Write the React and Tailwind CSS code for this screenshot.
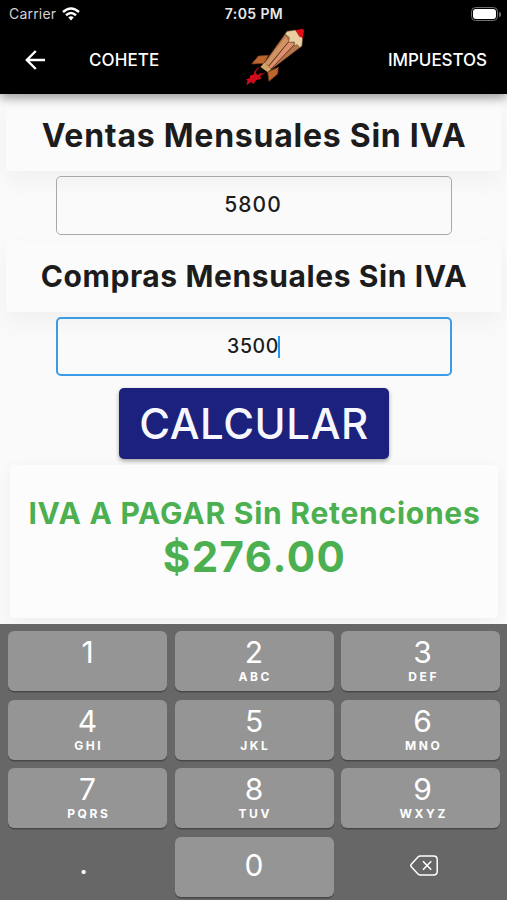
const keys = [
  ['1', ''], ['2', 'ABC'], ['3', 'DEF'],
  ['4', 'GHI'], ['5', 'JKL'], ['6', 'MNO'],
  ['7', 'PQRS'], ['8', 'TUV'], ['9', 'WXYZ'],
];

function Rocket() {
  return (
    <svg viewBox="0 24 240 198" className="h-[66px] w-20" fill="none">
      <path d="M50 132 L70 108 L100 106 L88 130 Z" fill="#bd652f" stroke="#7a3c1c" strokeWidth="2" />
      <path d="M130 142 L128 162 L102 184 L98 156 Z" fill="#bd652f" stroke="#7a3c1c" strokeWidth="2" />
      <path d="M70 140 L58 155 L57 163 L44 167 L45 174 L32 179 L38 182 L34 196 L48 186 L56 192 L64 180 L78 177 L76 166 L86 160 L76 160 L68 166 L62 158 Z" fill="#cf0d1a" />
      <path d="M74 140 L64 154 M92 156 L74 172" stroke="#7d0a10" strokeWidth="3" />
      <path d="M88 128 L150 42 L200 79 L99 156 L77 141 Z" fill="#b9764c" stroke="#4a2817" strokeWidth="2" />
      <path d="M90 130 L152 50 L162 66 L101 136 Z" fill="#cf9364" />
      <path d="M104 138 L162 66 L179 73 L110 146 Z" fill="#dd9170" />
      <path d="M102 137 L162 64 M108 147 L180 72" stroke="#63351f" strokeWidth="3" />
      <path d="M88 128 L77 141 L98 156 L108 148 Z" fill="#d3a468" />
      <path d="M150 42 L156 34 L182 30 L203 53 L201 77 L194 83 L187 74 L178 77 L178 66 L161 67 L163 53 Z" fill="#ead0a0" stroke="#6d4b30" strokeWidth="2" />
      <path d="M181 31 L204 26 L207 33 L203 53 L193 50 Z" fill="#df1019" />
    </svg>
  );
}

function Status() {
  return (
    <div className="grid h-7 grid-cols-3 items-center pl-[9px] pr-[6px] text-[14px] leading-none">
      <div className="flex items-center gap-[6px] text-[#d2d2d2]">
        <span className="tracking-[0.2px]">Carrier</span>
        <svg viewBox="0 0 18 14" className="h-[14px] w-[18px]" fill="none" stroke="#fff" strokeWidth="2.5">
          <path d="M1 5 Q9 -2 17 5" />
          <path d="M4 8.2 Q9 3.8 14 8.2" />
          <path d="M6.2 10.3 Q9 8.2 11.8 10.3 L9 13.5 Z" fill="#fff" stroke="none" />
        </svg>
      </div>
      <span className="pr-[2px] text-center font-semibold tracking-[0.4px] text-[#e8e8e8]">7:05 PM</span>
      <div className="flex items-center justify-end gap-px">
        <div className="flex h-[14px] w-[27px] rounded-[4.5px] border border-[#707070] p-[1px]">
          <div className="flex-1 rounded-[3px] bg-white" />
        </div>
        <div className="h-[5px] w-[2px] rounded-r-full bg-[#707070]" />
      </div>
    </div>
  );
}

export default function App() {
  return (
    <div className="flex h-[900px] w-[507px] flex-col overflow-hidden bg-[#fafafa] font-['Inter',sans-serif] text-[#1c1c1c]">
      <header className="z-10 h-[94px] shrink-0 bg-black text-white shadow-[0_4px_10px_rgba(0,0,0,0.38)]">
        <Status />
        <div className="flex h-[66px] items-center">
          <div className="flex w-[235px] items-center pl-[25px]">
            <svg viewBox="0 0 20 20" className="mb-[2px] h-5 w-5" fill="none" stroke="#fff" strokeWidth="2.4">
              <path d="M20 10 H2.5 M10.8 1 L1.8 10 L10.8 19" />
            </svg>
            <span className="ml-[44px] pb-px text-[17px] font-medium tracking-[0.1px]">COHETE</span>
          </div>
          <Rocket />
          <span className="mr-5 ml-auto pb-px text-[17px] font-medium tracking-[-0.05px]">IMPUESTOS</span>
        </div>
      </header>
      <main className="flex h-[530px] shrink-0 flex-col items-center pt-[6px]">
        <h1 className="flex h-[71px] w-[495px] items-center justify-center rounded bg-[#fbfbfb] pl-px text-[32px] font-bold tracking-[0.75px] whitespace-nowrap shadow-[0_10px_24px_rgba(0,0,0,0.045)]">Ventas Mensuales Sin IVA</h1>
        <div className="z-[1] mt-[5px] ml-px flex h-[59px] w-[396px] items-center justify-center rounded-[5px] border-[1.5px] border-[#a9a9a9] pr-[2px] pb-px text-[21px] font-medium tracking-[1.1px]">5800</div>
        <h1 className="mt-[6px] flex h-[71px] w-[495px] items-center justify-center rounded bg-[#fbfbfb] pl-px text-[30px] font-bold tracking-[0.6px] whitespace-nowrap shadow-[0_10px_24px_rgba(0,0,0,0.045)]">Compras Mensuales Sin IVA</h1>
        <div className="z-[1] mt-[5px] ml-px flex h-[59px] w-[396px] items-center justify-center rounded-[5px] border-2 border-[#3b9be4] pr-px text-[19.5px] font-medium tracking-[0.6px]">
          3500<span className="-ml-px h-[22px] w-[2px] bg-[#2196f3]" />
        </div>
        <button className="mt-3 flex h-[71px] w-[270px] shrink-0 items-center justify-center rounded-[5px] bg-[#1b217c] pl-px text-[42px] font-medium tracking-[0.6px] text-[#f7f8ff] shadow-[0_2px_4px_rgba(0,0,0,0.35)]">CALCULAR</button>
        <section className="mt-[6px] flex h-[153px] w-[488px] shrink-0 flex-col items-center rounded bg-[#fcfcfc] pt-[28px] pl-[2px] font-bold whitespace-nowrap text-[#4caf50] shadow-[0_4px_16px_rgba(0,0,0,0.05)]">
          <p className="text-[30px] leading-[40px] tracking-[0.75px]">IVA A PAGAR Sin Retenciones</p>
          <p className="text-[42px] leading-[48px] tracking-[1.5px]">$276.00</p>
        </section>
      </main>
      <div className="z-10 grid h-[276px] shrink-0 grid-cols-[159px_159px_159px] content-start gap-x-[7.5px] gap-y-[8.5px] bg-[#676767] pt-[7px] pl-2 text-white">
        {keys.map(([n, letters]) => (
          <div key={n} className="flex h-[60px] flex-col items-center rounded-[6px] bg-[#959595] pt-[4px] shadow-[0_1.5px_0_#484848] nth-[3n]:pl-[4px]">
            <span className="text-[30px] leading-[35px] font-normal">{n}</span>
            <span className="pl-[2.5px] text-[12px] leading-[14px] font-bold tracking-[2.6px]">{letters}</span>
          </div>
        ))}
        <div className="flex h-[60px] items-center justify-center pr-[8px] pb-[8px]">
          <span className="text-[30px] leading-none">.</span>
        </div>
        <div className="flex h-[60px] items-center justify-center rounded-[6px] bg-[#959595] pb-[2px] text-[30px] font-normal shadow-[0_1.5px_0_#484848]">0</div>
        <div className="flex h-[60px] items-center justify-center pb-[3px] pl-[6px]">
          <svg viewBox="0 0 28 21" className="h-[21px] w-7" fill="none" stroke="#fff" strokeWidth="1.5">
            <path d="M10.5 1 H23.5 Q27.2 1 27.2 4.5 V16.5 Q27.2 20 23.5 20 H10.5 Q9 20 8 19 L1.5 12 Q0 10.5 1.5 9 L8 2 Q9 1 10.5 1 Z" />
            <path d="M13 6.2 L21.2 14.8 M21.2 6.2 L13 14.8" />
          </svg>
        </div>
      </div>
    </div>
  );
}
